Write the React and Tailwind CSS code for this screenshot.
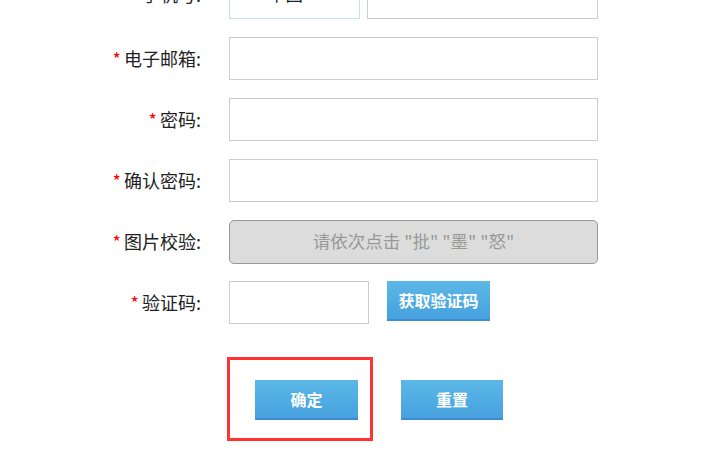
import React from "react";

const FONT = { fontFamily: '"Microsoft YaHei", "Noto Sans CJK SC", "Noto Sans", sans-serif' };

function Label({ required, children, lift }) {
  return (
    <div
      className={`w-[201px] flex justify-end items-center text-[18px] text-[#222] shrink-0 ${lift ? "pb-[7px]" : ""}`}
    >
      {required && <span className="text-[#f00] text-[18px] mr-[3px] leading-none mt-[-1px]">*</span>}
      <span>{children}:</span>
    </div>
  );
}

function Row({ label, required, lift, children }) {
  return (
    <div className="flex items-center h-[43px] mb-[18px]">
      <Label required={required} lift={lift}>{label}</Label>
      <div className="ml-[28px] flex items-center h-full">{children}</div>
    </div>
  );
}

const inputCls = "h-[43px] border border-[#ccc] bg-white outline-none px-2 text-[16px]";
const blueBtn =
  "h-[40px] bg-linear-to-b from-[#5cb8e7] to-[#46a1de] border-b-2 border-[#3c8dd4] text-white font-bold text-[16px]";

export default function App() {
  return (
    <div className="w-[702px] h-[449px] overflow-hidden bg-white" style={FONT}>
      <div className="mt-[-24px]">
        <Row label="手机号" lift>
          <div className="w-[131px] h-[43px] border border-[#bfe1f3] flex items-center pl-[38px] pb-[7px] text-[17.5px] text-[#222]">
            中国
          </div>
          <input className={`${inputCls} w-[231px] ml-[7px]`} />
        </Row>
        <Row label="电子邮箱" required>
          <input className={`${inputCls} w-[369px]`} />
        </Row>
        <Row label="密码" required>
          <input type="password" className={`${inputCls} w-[369px]`} />
        </Row>
        <Row label="确认密码" required>
          <input type="password" className={`${inputCls} w-[369px]`} />
        </Row>
        <Row label="图片校验" required>
          <div className="w-[369px] h-[44px] rounded-[5px] border border-[#999] bg-[#dcdcdc] flex items-center justify-center text-[17.5px] text-[#999]">
            请依次点击 "批" "墨" "怒"
          </div>
        </Row>
        <Row label="验证码" required>
          <input className={`${inputCls} w-[140px]`} />
          <button className={`${blueBtn} w-[103px] ml-[18px] self-start`}>获取验证码</button>
        </Row>

        <div className="flex mt-[56px] pl-[255px]">
          <div className="relative">
            <button className={`${blueBtn} w-[103px]`}>确定</button>
            <div className="absolute left-[-28px] top-[-23px] w-[146px] h-[84px] border-[3px] border-[#f33] pointer-events-none" />
          </div>
          <button className={`${blueBtn} w-[102px] ml-[43px]`}>重置</button>
        </div>
      </div>
    </div>
  );
}
